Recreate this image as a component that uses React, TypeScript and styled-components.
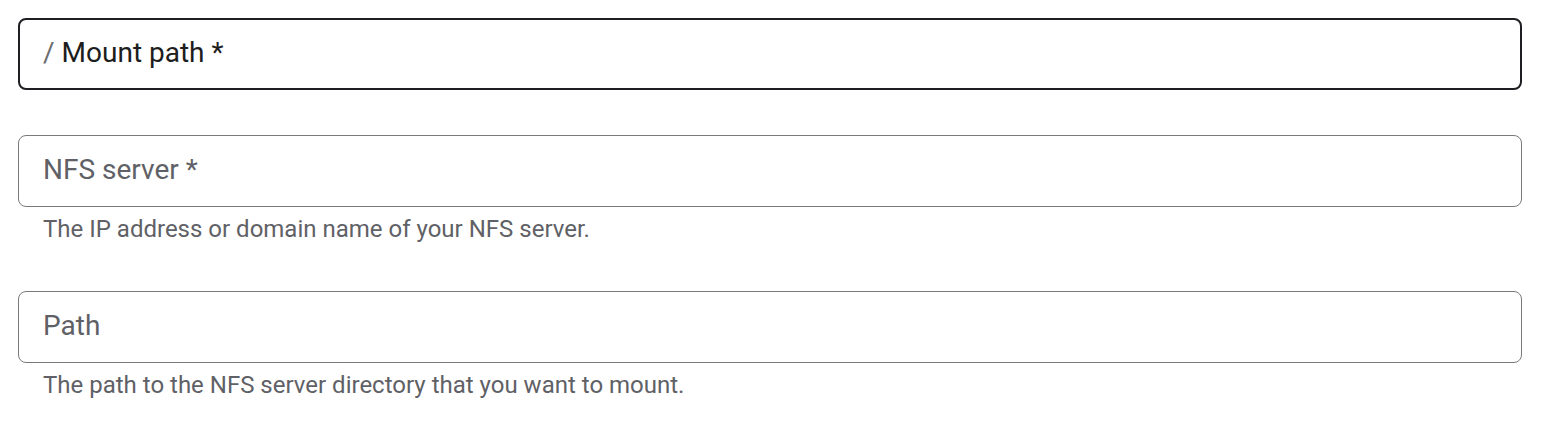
import React from "react";
import styled, { createGlobalStyle } from "styled-components";

const GlobalStyle = createGlobalStyle`
  html, body {
    margin: 0;
    padding: 0;
    background: #ffffff;
    font-family: Roboto, "Noto Sans", Arial, sans-serif;
  }
`;

const Form = styled.form`
  display: flex;
  flex-direction: column;
  padding: 18px 26px 0 18px;
`;

const Field = styled.div<{ $gap: number }>`
  display: flex;
  flex-direction: column;
  margin-bottom: ${p => p.$gap}px;
`;

const Box = styled.div<{ $focused?: boolean }>`
  box-sizing: border-box;
  height: 72px;
  display: flex;
  align-items: center;
  padding: 0 ${p => (p.$focused ? 23 : 24)}px 4px;
  border: ${p => (p.$focused ? "2px solid #1f1f23" : "1px solid #797a7d")};
  border-radius: 8px;
  background: #ffffff;
`;

const Prefix = styled.span`
  color: #6b6c70;
  font-size: 28px;
  margin-right: 7px;
`;

const Label = styled.span<{ $active?: boolean }>`
  font-size: 28px;
  color: ${p => (p.$active ? "#1d1d20" : "#5f6166")};
`;

const Helper = styled.div`
  margin-top: 6px;
  padding-left: 25px;
  font-size: 24px;
  line-height: 32px;
  color: #5f6166;
`;

export default function App() {
  return (
    <>
      <GlobalStyle />
      <Form>
        <Field $gap={45}>
          <Box $focused>
            <Prefix>/</Prefix>
            <Label $active>Mount path *</Label>
          </Box>
        </Field>
        <Field $gap={46}>
          <Box>
            <Label>NFS server *</Label>
          </Box>
          <Helper>The IP address or domain name of your NFS server.</Helper>
        </Field>
        <Field $gap={0}>
          <Box>
            <Label>Path</Label>
          </Box>
          <Helper>The path to the NFS server directory that you want to mount.</Helper>
        </Field>
      </Form>
    </>
  );
}
